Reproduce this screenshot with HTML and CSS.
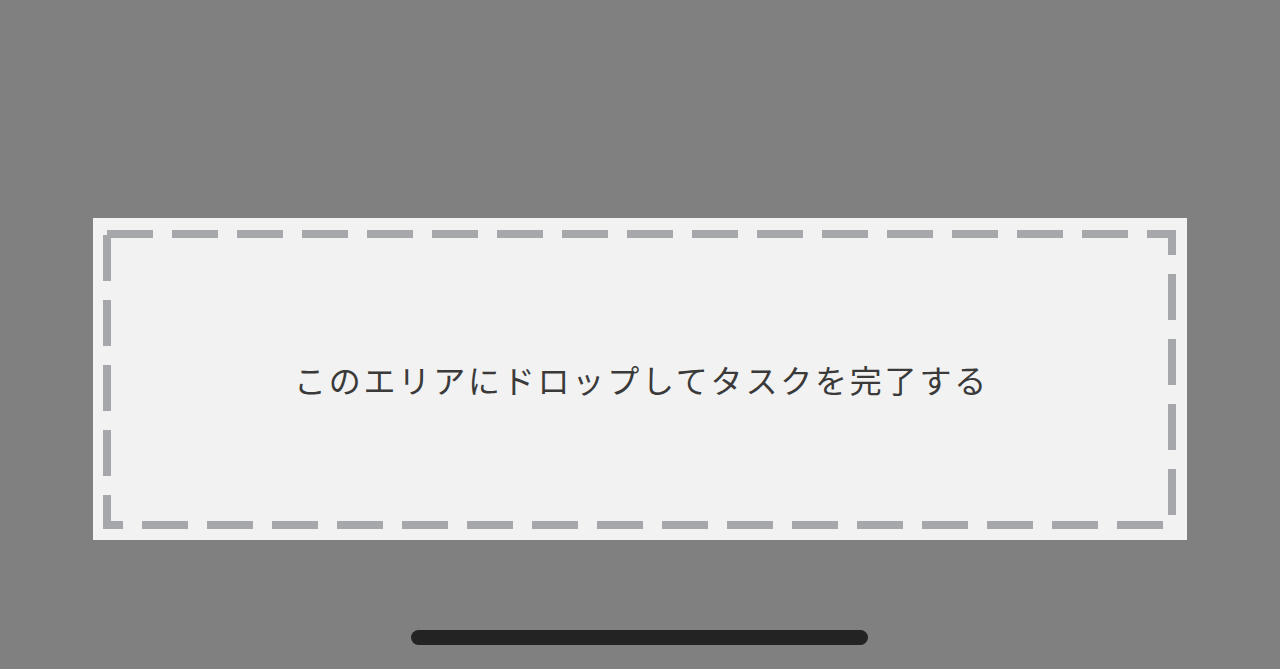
FILE: index.html
```html
<!DOCTYPE html>
<html lang="ja">
<head>
<meta charset="utf-8">
<link rel="stylesheet" href="styles.css">
</head>
<body>
<div class="screen">
  <div class="dropzone">
    <svg class="dash" width="1094" height="322" viewBox="0 0 1094 322">
      <rect x="14" y="16" width="1065" height="291" fill="none" stroke="#a6a7aa" stroke-width="8" stroke-dasharray="46 19"/>
    </svg>
    <span class="label">このエリアにドロップしてタスクを完了する</span>
  </div>
  <div class="home"></div>
</div>
</body>
</html>
```
FILE: styles.css
```css
html, body {
  margin: 0;
  padding: 0;
}
body {
  background: #808080;
  width: 1280px;
  height: 669px;
  overflow: hidden;
  font-family: "Noto Sans CJK JP", "Noto Sans", sans-serif;
}
.screen {
  display: flex;
  flex-direction: column;
  align-items: flex-start;
  padding-top: 218px;
}
.dropzone {
  position: relative;
  margin-left: 93px;
  width: 1094px;
  height: 322px;
  background: #f2f2f2;
  display: flex;
  align-items: center;
  justify-content: center;
}
.dash {
  position: absolute;
  left: 0;
  top: 0;
}
.label {
  font-size: 32px;
  letter-spacing: 2.8px;
  color: #3a3a3a;
  line-height: 1;
  padding-left: 3px;
}
.home {
  margin-top: 90px;
  margin-left: 411px;
  width: 457px;
  height: 15px;
  border-radius: 8px;
  background: #232323;
}
```
